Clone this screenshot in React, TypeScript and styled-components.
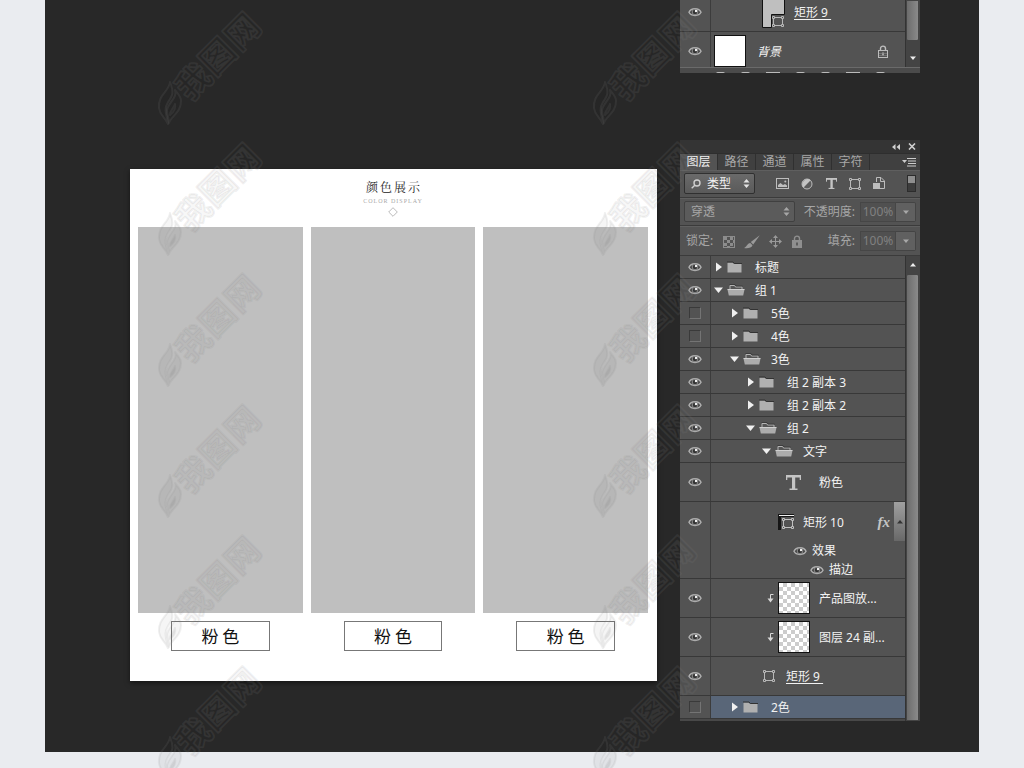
import React from "react";
import styled, { createGlobalStyle, css } from "styled-components";

const GlobalStyle = createGlobalStyle`
  *, *::before, *::after { box-sizing: border-box; }
  body {
    margin: 0;
    background: #eaecf0;
    font-family: "Noto Sans", "Noto Sans CJK SC", sans-serif;
    font-size: 12px;
    line-height: 16px;
    color: #f2f2f2;
  }
  button, input, select { font: inherit; color: inherit; margin: 0; padding: 0; border: 0; background: none; }
  ul { list-style: none; margin: 0; padding: 0; }
  svg { display: block; flex: none; }
`;

const Page = styled.div`
  position: relative;
  overflow: hidden;
  padding: 0 45px 16px;
`;

const Stage = styled.main`
  display: flex;
  align-items: flex-end;
  gap: 23px;
  padding: 0 59px 31px 85px;
  background: #282828;
`;

/* ---------- artboard ---------- */

const Artboard = styled.section`
  flex: 1;
  min-width: 0;
  margin-bottom: 40px;
  padding: 9px 9px 30px 8px;
  background: #fff;
  box-shadow: 0 2px 5px rgba(0, 0, 0, 0.5);
  color: #222;
`;

const Heading = styled.header`
  display: flex;
  flex-direction: column;
  align-items: center;
  height: 49px;
`;

const Title = styled.h1`
  margin: 0;
  padding-left: 2px;
  font-family: "Noto Serif CJK SC", "Noto Sans CJK SC", serif;
  font-weight: 400;
  font-size: 12px;
  line-height: 18px;
  letter-spacing: 2px;
`;

const Subtitle = styled.p`
  margin: 2px 0 3px;
  font-family: "Liberation Serif", serif;
  font-size: 6px;
  line-height: 6px;
  letter-spacing: 1px;
  color: #aaa;
`;

const Swatches = styled.div`
  display: grid;
  grid-template-columns: repeat(3, 1fr);
  gap: 8px;
`;

const Swatch = styled.figure`
  display: flex;
  flex-direction: column;
  align-items: center;
  gap: 8px;
  margin: 0;
`;

const SwatchColor = styled.div`
  width: 100%;
  height: 386px;
  background: #bfbfbf;
`;

const SwatchLabel = styled.figcaption`
  width: 60%;
  border: 1px solid #777;
  color: #111;
  font-family: "Noto Sans CJK SC", sans-serif;
  font-size: 17px;
  line-height: 28px;
  text-align: center;
`;

/* ---------- panels ---------- */

const PanelColumn = styled.div`
  display: flex;
  flex-direction: column;
  gap: 67px;
  width: 240px;
`;

const Panel = styled.section`
  background: #535353;
`;

const TitleBar = styled.div`
  display: flex;
  justify-content: flex-end;
  align-items: center;
  gap: 8px;
  height: 13px;
  padding-right: 4px;
  background: #343434;
`;

const IconButton = styled.button`
  display: flex;
  align-items: center;
  justify-content: center;
`;

const TabBar = styled.div`
  display: flex;
  height: 17px;
  background: #404040;
  border-top: 1px solid #2e2e2e;
`;

const Tab = styled.button<{ $active?: boolean }>`
  width: 38px;
  border-right: 1px solid #303030;
  line-height: 16px;
  color: #a8a8a8;
  ${(p) => p.$active && css`background: #535353; color: #f2f2f2;`}
`;

const TabMenu = styled(IconButton)`
  margin-left: auto;
  padding-right: 4px;
`;

const Toolbar = styled.div<{ $disabled?: boolean }>`
  display: flex;
  align-items: center;
  height: 28px;
  padding: 0 4px;
  border-bottom: 1px solid #3b3b3b;
  box-shadow: inset 0 1px 0 #5f5f5f;
  color: ${(p) => (p.$disabled ? "#a6a6a6" : "#f2f2f2")};
`;

const LockBar = styled(Toolbar)`
  height: 30px;
  padding-left: 6px;
`;

const SelectBox = styled.label<{ $wide?: boolean }>`
  display: flex;
  align-items: center;
  gap: 6px;
  width: ${(p) => (p.$wide ? 111 : 71)}px;
  height: 21px;
  padding: 0 4px 0 6px;
  border: 1px solid ${(p) => (p.$wide ? "#404040" : "#303030")};
  border-radius: 2px;
  background: ${(p) => (p.$wide ? "#5b5b5b" : "linear-gradient(#6a6a6a, #5a5a5a)")};
`;

const Select = styled.select`
  flex: 1;
  min-width: 0;
  appearance: none;
  outline: 0;
`;

const FilterIcons = styled.div`
  display: flex;
  flex: 1;
  justify-content: space-between;
  padding: 0 22px 0 21px;
`;

const Switch = styled.button`
  width: 9px;
  height: 17px;
  border: 1px solid #2c2c2c;
  background: linear-gradient(#8e8e8e 0 50%, #3c3c3c 50%);
`;

const FieldLabel = styled.label`
  margin-left: auto;
  padding-right: 5px;
`;

const Percent = styled.input`
  width: 36px;
  height: 20px;
  border: 1px solid #464646;
  background: #505050;
  color: #808080;
  text-align: center;
`;

const StepButton = styled(IconButton)`
  width: 20px;
  height: 20px;
  border: 1px solid #444;
  border-left: 0;
  border-radius: 0 2px 2px 0;
  background: #606060;
`;

const LockIcons = styled.div`
  display: flex;
  align-items: center;
  gap: 9px;
  padding: 2px 0 0 10px;
`;

const Body = styled.div`
  display: flex;
`;

const Layers = styled.ul`
  flex: 1;
  min-width: 0;
  border-bottom: 2px solid #484848;
`;

/* A short viewport scrolled to the very end of the layer list. */
const ScrolledBody = styled(Body)`
  height: 67px;
  overflow: hidden;
`;

const ScrolledLayers = styled.ul`
  flex: 1;
  min-width: 0;
  margin-top: -7px;
`;

const rowHeights = { group: 23, layer: 39, effects: 77 };
type RowSize = keyof typeof rowHeights;

const LayerRow = styled.li<{ $size: RowSize }>`
  display: flex;
  height: ${(p) => rowHeights[p.$size]}px;
  border-bottom: 1px solid #383838;
`;

const EyeCell = styled.div<{ $size: RowSize }>`
  display: flex;
  align-items: ${(p) => (p.$size === "effects" ? "flex-start" : "center")};
  justify-content: center;
  width: 31px;
  padding-top: ${(p) => (p.$size === "effects" ? 14 : 0)}px;
  border-right: 1px solid #3c3c3c;
`;

const HiddenBox = styled.button`
  width: 12px;
  height: 12px;
  border: 1px solid #3a3a3a;
  border-right-color: #747474;
  border-bottom-color: #747474;
`;

const LayerCell = styled.div<{ $selected?: boolean }>`
  flex: 1;
  min-width: 0;
  background: ${(p) => (p.$selected ? "#596678" : "transparent")};
`;

const LayerLine = styled.div<{ $indent: number }>`
  display: flex;
  align-items: center;
  height: 100%;
  max-height: 39px;
  padding-left: ${(p) => p.$indent}px;
`;

const Disclosure = styled(IconButton)`
  width: 9px;
  margin-right: 4px;
`;

const LayerName = styled.span<{ $gap: number; $underline?: boolean; $italic?: boolean }>`
  padding: 2px 0 0 ${(p) => p.$gap}px;
  white-space: pre;
  text-decoration: ${(p) => (p.$underline ? "underline" : "none")};
  text-underline-offset: 2px;
  font-style: ${(p) => (p.$italic ? "italic" : "normal")};
`;

const Fx = styled.span`
  margin-left: auto;
  padding-right: 4px;
  font-family: "Liberation Serif", serif;
  font-style: italic;
  font-weight: 700;
  font-size: 15px;
  color: #c4c4c4;
`;

const FxToggle = styled(IconButton)`
  width: 11px;
  height: 39px;
  background: linear-gradient(#a0a0a0, #686868);
`;

const EffectLine = styled.div<{ $nested?: boolean }>`
  display: flex;
  align-items: center;
  gap: 5px;
  height: 19px;
  padding-left: ${(p) => (p.$nested ? 99 : 82)}px;
`;

const Thumb = styled.span<{ $checked?: boolean }>`
  width: 32px;
  height: 32px;
  border: 1px solid #111;
  background: ${(p) =>
    p.$checked ? "repeating-conic-gradient(#ccc 0 25%, #fff 0 50%) 0 0 / 8px 8px" : "#fff"};
`;

const ClipSlot = styled.span`
  padding-right: 4px;
`;

const LockSlot = styled.span`
  margin-left: auto;
  padding-right: 16px;
`;

const Scrollbar = styled.div<{ $end?: boolean }>`
  display: flex;
  flex-direction: ${(p) => (p.$end ? "column-reverse" : "column")};
  width: 15px;
  padding-right: 1px;
  background: #444;
  border-left: 1px solid #333;
`;

const ScrollArrow = styled(IconButton)`
  height: 18px;
`;

const ScrollThumb = styled.div<{ $end?: boolean }>`
  flex: 1;
  margin-bottom: ${(p) => (p.$end ? 8 : 0)}px;
  border: 1px solid #444;
  border-radius: ${(p) => (p.$end ? "0 0 2px 2px" : "2px 2px 0 0")};
  background: linear-gradient(90deg, #6c6c6c, #8a8a8a);
`;

const CutFooter = styled.div`
  display: flex;
  justify-content: center;
  gap: 16px;
  height: 6px;
  padding-top: 4px;
  overflow: hidden;
  border-top: 1px solid #6a6a6a;
  background: #4b4b4b;
`;

const FooterChip = styled.span<{ $wide?: boolean }>`
  width: ${(p) => (p.$wide ? 14 : 9)}px;
  height: 4px;
  border-top: 1px solid #bbb;
  border-radius: ${(p) => (p.$wide ? 0 : 4)}px;
`;

/* ---------- watermark ---------- */

const Watermarks = styled.div`
  position: absolute;
  inset: 0;
  display: grid;
  grid-template-columns: repeat(2, 435px);
  grid-auto-rows: 131px;
  padding-left: 150px;
  overflow: hidden;
  pointer-events: none;
`;

/* ---------- icons ---------- */

const Eye = () => (
  <svg width="14" height="12" viewBox="0 0 14 12">
    <path d="M1 6.300C3 1.500 11 1.500 13 6.300C11 10.500 3 10.500 1 6.300Z" fill="#474747" stroke="#b0b0b0" strokeWidth="1.500" />
    <circle cx="7" cy="6" r="2.800" fill="#333" stroke="#8c8c8c" strokeWidth="1" />
    <circle cx="8" cy="5" r="1.200" fill="#f4f4f4" />
  </svg>
);

const Folder = ({ open }: { open?: boolean }) =>
  open ? (
    <svg width="18" height="12" viewBox="0 0 18 12">
      <path d="M3 5V1.500H7.500L8.500 3H15V5" fill="#555" stroke="#b4b4b4" />
      <path d="M2.500 .5H8L9 2H15.500" fill="none" stroke="#333" strokeWidth=".7" />
      <path d="M.5 5.500H17.500L16.200 11.500H1.800Z" fill="#acacac" />
      <path d="M.5 5.500H17.500" stroke="#d0d0d0" />
    </svg>
  ) : (
    <svg width="15" height="12" viewBox="0 0 15 12">
      <path d="M.5 11.500V1.500H5.500L7 3H14.500V11.500Z" fill="#b0b0b0" />
      <path d="M0 1H6L7.500 2.500H15" fill="none" stroke="#333" />
    </svg>
  );

const Triangle = ({ open }: { open?: boolean }) => (
  <svg width="9" height="10" viewBox="0 0 9 10">
    <path d={open ? "M0 2.500H9L4.500 8Z" : "M2 0.500L8 5L2 9.500Z"} fill="#f0f0f0" />
  </svg>
);

const ShapeIcon = () => (
  <svg width="12" height="12" viewBox="0 0 12 12" fill="none" stroke="#b8b8b8">
    <path d="M3 1.500H9M3 10.500H9M1.500 3V9M10.500 3V9" />
    <path d="M.5 .5H2.500V2.500H.5ZM9.500 .5H11.500V2.500H9.500ZM.5 9.500H2.500V11.500H.5ZM9.500 9.500H11.500V11.500H9.500Z" />
  </svg>
);

const TypeIcon = ({ size = 11 }: { size?: number }) => (
  <svg width={size} height={size} viewBox="0 0 15 15">
    <rect width="15" height="2.500" fill="#c4c4c4" />
    <rect width="1.300" height="5" fill="#c4c4c4" />
    <rect x="13.700" width="1.300" height="5" fill="#c4c4c4" />
    <rect x="6" width="3.200" height="14" fill="#c4c4c4" />
    <rect x="3.500" y="13.500" width="8" height="1.500" fill="#c4c4c4" />
  </svg>
);

const VectorThumb = () => (
  <svg width="16" height="16" viewBox="0 0 16 16">
    <path d="M0 0H16V3H3V16H0Z" fill="#151515" />
    <path d="M1 1.500H16" stroke="#eee" />
    <g transform="translate(4 4)" fill="none" stroke="#c0c0c0">
      <path d="M3 1.500H9M3 9.500H9M1.500 3V8M10.500 3V8" />
      <path d="M.5 .5H2.500V2.500H.5ZM9.500 .5H11.500V2.500H9.500ZM.5 8.500H2.500V10.500H.5ZM9.500 8.500H11.500V10.500H9.500Z" />
    </g>
  </svg>
);

const FillThumb = () => (
  <svg width="24" height="34" viewBox="0 0 24 34">
    <path d="M.5 -2V32.500H9.500V19.500H22.500V-2Z" fill="#bfbfbf" stroke="#111" />
    <g transform="translate(10 21)" fill="none" stroke="#b8b8b8">
      <path d="M3 1.500H9M3 9.500H9M1.500 3V8M10.500 3V8" />
      <path d="M.5 .5H2.500V2.500H.5ZM9.500 .5H11.500V2.500H9.500ZM.5 8.500H2.500V10.500H.5ZM9.500 8.500H11.500V10.500H9.500Z" />
    </g>
  </svg>
);

const ClipArrow = () => (
  <svg width="7" height="9" viewBox="0 0 7 9">
    <path d="M6.500 .5H3.500V5" fill="none" stroke="#d8d8d8" />
    <path d="M.5 4.500H6.500L3.500 8.500Z" fill="#d8d8d8" />
  </svg>
);

const Lock = ({ solid }: { solid?: boolean }) => (
  <svg width="12" height="13" viewBox="0 0 12 13">
    <path d="M3.500 6V3.500C3.500 .3 8.500 .3 8.500 3.500V6" fill="none" stroke={solid ? "#8f8f8f" : "#bcbcbc"} strokeWidth="1.400" />
    <rect x="1.500" y="5.500" width="9" height="7" fill={solid ? "#8f8f8f" : "#535353"} stroke={solid ? "#8f8f8f" : "#bcbcbc"} />
    <path d="M6 7.500V10.500" stroke={solid ? "#4a4a4a" : "#bcbcbc"} strokeWidth="1.500" />
    {!solid && <path d="M2 8.500H10M2 10.500H10" stroke="#888" strokeWidth=".6" />}
  </svg>
);

const UpDown = ({ color = "#e4e4e4" }: { color?: string }) => (
  <svg width="7" height="9" viewBox="0 0 7 9" fill={color}>
    <path d="M3.500 0L6.500 3.500H.5ZM3.500 9L6.500 5.500H.5Z" />
  </svg>
);

const Caret = ({ up, color = "#a8a8a8" }: { up?: boolean; color?: string }) => (
  <svg width="6" height="4" viewBox="0 0 6 4" fill={color}>
    <path d={up ? "M3 0L6 3.500H0Z" : "M0 .5H6L3 4Z"} />
  </svg>
);

const Search = () => (
  <svg width="10" height="10" viewBox="0 0 10 10" fill="none" stroke="#d0d0d0" strokeWidth="1.400">
    <circle cx="6" cy="4" r="3" />
    <path d="M3.800 6.200L.7 9.300" />
  </svg>
);

const ImageIcon = () => (
  <svg width="13" height="11" viewBox="0 0 13 11">
    <rect x=".5" y=".5" width="12" height="10" fill="none" stroke="#bdbdbd" />
    <path d="M2 9V7L4.500 5L7 7L9 6L11 7.500V9Z" fill="#bdbdbd" />
    <circle cx="9.300" cy="3.500" r="1" fill="#bdbdbd" />
  </svg>
);

const AdjustIcon = () => (
  <svg width="12" height="12" viewBox="0 0 12 12">
    <circle cx="6" cy="6" r="5" fill="#5c5c5c" stroke="#bdbdbd" />
    <path d="M2.300 9.700A5.300 5.300 0 0 1 9.700 2.300Z" fill="#c4c4c4" />
  </svg>
);

const SmartIcon = () => (
  <svg width="12" height="13" viewBox="0 0 12 13">
    <path d="M3.500 5V.5H8L11.500 4V11.500H7" fill="none" stroke="#bdbdbd" />
    <path d="M7.500 .5V4.500H11.500" fill="none" stroke="#bdbdbd" />
    <rect x="0" y="6" width="7" height="6" fill="#bdbdbd" />
  </svg>
);

const Pixels = () => (
  <svg width="12" height="12" viewBox="0 0 12 12" fill="#8c8c8c">
    <path d="M0 0H12V12H0ZM1 1V11H11V1Z" fillRule="evenodd" />
    <path d="M1 1H4V4H1ZM7 1H10V4H7ZM4 4H7V7H4ZM10 4H11V7H10ZM1 7H4V10H1ZM7 7H10V10H7ZM4 10H7V11H4Z" />
  </svg>
);

const Brush = () => (
  <svg width="16" height="14" viewBox="0 0 16 14" fill="#9a9a9a">
    <path d="M15.800 .2L6.800 7L9.200 9.400Z" />
    <path d="M6.300 8L8.500 10.200C7.500 13 4 13.500 0 13C3 12 3 8.500 6.300 8Z" />
  </svg>
);

const Move = () => (
  <svg width="13" height="13" viewBox="0 0 13 13">
    <path d="M6.500 2V11M2 6.500H11" stroke="#999" />
    <path d="M6.500 0L9 3H4ZM6.500 13L9 10H4ZM0 6.500L3 4V9ZM13 6.500L10 4V9Z" fill="#999" />
  </svg>
);

const Watermark = () => (
  <svg width="120" height="130" viewBox="0 0 120 130">
    <g
      fill="rgba(0,0,0,.04)"
      stroke="rgba(136,136,136,.13)"
      strokeWidth="2"
      strokeLinejoin="round"
      fontFamily="'Noto Sans CJK SC', sans-serif"
      fontWeight="700"
      fontSize="34"
    >
      <text transform="translate(42 80) rotate(-45)" textAnchor="middle" dominantBaseline="central">我</text>
      <text transform="translate(66 55) rotate(-45)" textAnchor="middle" dominantBaseline="central">图</text>
      <text transform="translate(91 30) rotate(-45)" textAnchor="middle" dominantBaseline="central">网</text>
      <path d="M20 82C19 92 8 94 9 108C10 116 15 117 18 124C17 115 13 110 18 102C21 97 25 95 20 82Z" />
      <path d="M25 90C28 97 19 102 17 110C17 115 19 118 19 123C21 116 31 113 31 101C31 96 28 94 25 90Z" />
      <path d="M25 104C24 108 20 110 20 115C24 112 26 109 25 104Z" />
    </g>
  </svg>
);

/* ---------- data ---------- */

interface Group {
  name: string;
  level: number;
  open?: boolean;
  hidden?: boolean;
  selected?: boolean;
}

const groups: Group[] = [
  { name: "标题", level: 0 },
  { name: "组 1", level: 0, open: true },
  { name: "5色", level: 1, hidden: true },
  { name: "4色", level: 1, hidden: true },
  { name: "3色", level: 1, open: true },
  { name: "组 2 副本 3", level: 2 },
  { name: "组 2 副本 2", level: 2 },
  { name: "组 2", level: 2, open: true },
  { name: "文字", level: 3, open: true },
];

interface RowProps {
  size: RowSize;
  hidden?: boolean;
  selected?: boolean;
  children: React.ReactNode;
}

const Row = ({ size, hidden, selected, children }: RowProps) => (
  <LayerRow $size={size}>
    <EyeCell $size={size}>
      {hidden ? (
        <HiddenBox aria-label="显示图层" />
      ) : (
        <IconButton aria-label="隐藏图层"><Eye /></IconButton>
      )}
    </EyeCell>
    <LayerCell $selected={selected}>{children}</LayerCell>
  </LayerRow>
);

const GroupRow = ({ name, level, open, hidden, selected }: Group) => (
  <Row size="group" hidden={hidden} selected={selected}>
    <LayerLine $indent={3 + level * 16}>
      <Disclosure aria-label={name} aria-expanded={!!open}><Triangle open={open} /></Disclosure>
      <Folder open={open} />
      <LayerName $gap={open ? 10 : 13}>{name}</LayerName>
    </LayerLine>
  </Row>
);

const ClippedRow = ({ name }: { name: string }) => (
  <Row size="layer">
    <LayerLine $indent={56}>
      <ClipSlot><ClipArrow /></ClipSlot>
      <Thumb $checked />
      <LayerName $gap={9}>{name}</LayerName>
    </LayerLine>
  </Row>
);

const tabs = ["图层", "路径", "通道", "属性", "字符"];

export default function App() {
  return (
    <>
      <GlobalStyle />
      <Page>
        <Stage>
          <Artboard>
            <Heading>
              <Title>颜色展示</Title>
              <Subtitle>COLOR DISPLAY</Subtitle>
              <svg width="10" height="10" viewBox="0 0 10 10">
                <path d="M5 .7L9.300 5L5 9.300L.7 5Z" fill="none" stroke="#aaa" strokeWidth=".8" />
              </svg>
            </Heading>
            <Swatches>
              {[0, 1, 2].map((i) => (
                <Swatch key={i}>
                  <SwatchColor />
                  <SwatchLabel>粉 色</SwatchLabel>
                </Swatch>
              ))}
            </Swatches>
          </Artboard>

          <PanelColumn>
            <Panel>
              <ScrolledBody>
                <ScrolledLayers>
                  <Row size="layer">
                    <LayerLine $indent={51}>
                      <FillThumb />
                      <LayerName $gap={8} $underline>{"矩形 9 "}</LayerName>
                    </LayerLine>
                  </Row>
                  <Row size="layer">
                    <LayerLine $indent={3}>
                      <Thumb />
                      <LayerName $gap={11} $italic>背景</LayerName>
                      <LockSlot><Lock /></LockSlot>
                    </LayerLine>
                  </Row>
                </ScrolledLayers>
                <Scrollbar $end>
                  <ScrollArrow aria-label="向下滚动"><Caret color="#eee" /></ScrollArrow>
                  <ScrollThumb $end />
                </Scrollbar>
              </ScrolledBody>
              <CutFooter>
                <FooterChip />
                <FooterChip />
                <FooterChip $wide />
                <FooterChip />
                <FooterChip />
                <FooterChip $wide />
                <FooterChip />
              </CutFooter>
            </Panel>

            <Panel>
              <TitleBar>
                <IconButton aria-label="折叠">
                  <svg width="8" height="6" viewBox="0 0 8 6" fill="#d0d0d0">
                    <path d="M3.500 0V6L0 3ZM8 0V6L4.500 3Z" />
                  </svg>
                </IconButton>
                <IconButton aria-label="关闭">
                  <svg width="8" height="7" viewBox="0 0 8 7" stroke="#d0d0d0" strokeWidth="1.600">
                    <path d="M1 .5L7 6.500M7 .5L1 6.500" />
                  </svg>
                </IconButton>
              </TitleBar>
              <TabBar role="tablist">
                {tabs.map((t, i) => (
                  <Tab key={t} role="tab" aria-selected={i === 0} $active={i === 0}>{t}</Tab>
                ))}
                <TabMenu aria-label="面板菜单">
                  <svg width="14" height="9" viewBox="0 0 14 9">
                    <path d="M0 2H5L2.500 5Z" fill="#ccc" />
                    <path d="M5 .5H14M6 3H14M6 5.500H14M5 8H14" stroke="#ccc" />
                  </svg>
                </TabMenu>
              </TabBar>

              <Toolbar>
                <SelectBox>
                  <Search />
                  <Select aria-label="筛选类型"><option>类型</option></Select>
                  <UpDown />
                </SelectBox>
                <FilterIcons>
                  <IconButton aria-label="像素图层"><ImageIcon /></IconButton>
                  <IconButton aria-label="调整图层"><AdjustIcon /></IconButton>
                  <IconButton aria-label="文字图层"><TypeIcon /></IconButton>
                  <IconButton aria-label="形状图层"><ShapeIcon /></IconButton>
                  <IconButton aria-label="智能对象"><SmartIcon /></IconButton>
                </FilterIcons>
                <Switch aria-label="图层过滤" />
              </Toolbar>

              <Toolbar $disabled>
                <SelectBox $wide>
                  <Select aria-label="混合模式"><option>穿透</option></Select>
                  <UpDown color="#a6a6a6" />
                </SelectBox>
                <FieldLabel htmlFor="opacity">不透明度:</FieldLabel>
                <Percent id="opacity" defaultValue="100%" />
                <StepButton aria-label="调整不透明度"><Caret /></StepButton>
              </Toolbar>

              <LockBar $disabled>
                <span>锁定:</span>
                <LockIcons>
                  <IconButton aria-label="锁定像素"><Pixels /></IconButton>
                  <IconButton aria-label="锁定绘制"><Brush /></IconButton>
                  <IconButton aria-label="锁定位置"><Move /></IconButton>
                  <IconButton aria-label="全部锁定"><Lock solid /></IconButton>
                </LockIcons>
                <FieldLabel htmlFor="fill">填充:</FieldLabel>
                <Percent id="fill" defaultValue="100%" />
                <StepButton aria-label="调整填充"><Caret /></StepButton>
              </LockBar>

              <Body>
                <Layers>
                  {groups.map((g) => <GroupRow key={g.name} {...g} />)}
                  <Row size="layer">
                    <LayerLine $indent={75}>
                      <TypeIcon size={15} />
                      <LayerName $gap={18}>粉色</LayerName>
                    </LayerLine>
                  </Row>
                  <Row size="effects">
                    <LayerLine $indent={67}>
                      <VectorThumb />
                      <LayerName $gap={9}>矩形 10</LayerName>
                      <Fx>fx</Fx>
                      <FxToggle aria-label="折叠效果"><Caret up color="#333" /></FxToggle>
                    </LayerLine>
                    <EffectLine><Eye />效果</EffectLine>
                    <EffectLine $nested><Eye />描边</EffectLine>
                  </Row>
                  <ClippedRow name="产品图放..." />
                  <ClippedRow name="图层 24 副..." />
                  <Row size="layer">
                    <LayerLine $indent={52}>
                      <ShapeIcon />
                      <LayerName $gap={11} $underline>{"矩形 9 "}</LayerName>
                    </LayerLine>
                  </Row>
                  <GroupRow name="2色" level={1} hidden selected />
                </Layers>
                <Scrollbar>
                  <ScrollArrow aria-label="向上滚动"><Caret up color="#eee" /></ScrollArrow>
                  <ScrollThumb />
                </Scrollbar>
              </Body>
            </Panel>
          </PanelColumn>
        </Stage>

        <Watermarks aria-hidden="true">
          {Array.from({ length: 12 }, (_, i) => <Watermark key={i} />)}
        </Watermarks>
      </Page>
    </>
  );
}
